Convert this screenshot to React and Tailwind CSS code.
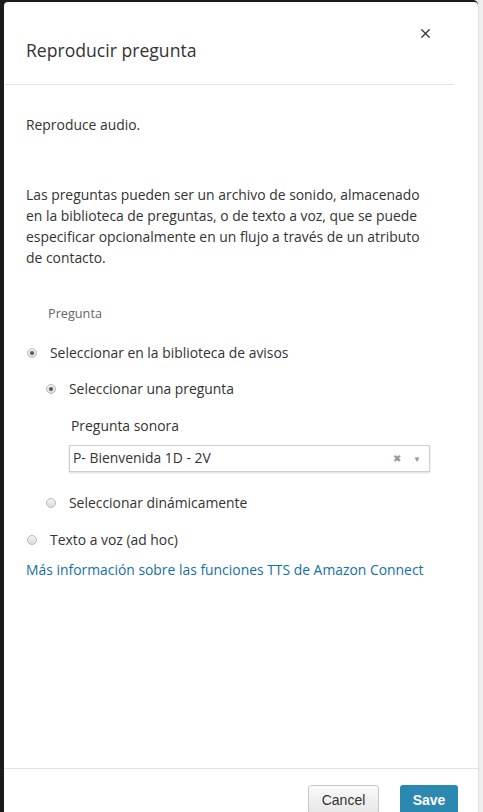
import { X } from 'lucide-react';

function Radio({ checked }) {
  return (
    <span className="flex h-[10px] w-[10px] shrink-0 items-center justify-center rounded-full border border-[#b9b9b9] bg-gradient-to-b from-[#f4f4f4] to-[#dcdcdc]">
      {checked && <span className="h-[4px] w-[4px] rounded-full bg-[#555]" />}
    </span>
  );
}

function Option({ checked, label, indent, className }) {
  return (
    <div className={`flex items-center leading-[20px] ${indent ? 'ml-[20px]' : 'ml-[1px]'} ${className}`}>
      <Radio checked={checked} />
      <span className="ml-[13px] text-[#333]">{label}</span>
    </div>
  );
}

export default function App() {
  return (
    <div
      className="flex h-[812px] w-[483px] overflow-hidden bg-[#ececec] text-[13.9px] text-[#333]"
      style={{ fontFamily: '"Open Sans", "Noto Sans", sans-serif' }}
    >
      <div className="w-[4px] shrink-0 bg-[#1b1b1b]" />
      <div className="w-[474px] shrink-0 rounded-tr-[5px] bg-[#1b1b1b] pt-[2px]">
        <div className="flex h-full flex-col rounded-t-[4px] bg-white">
          {/* header */}
          <div className="ml-[1px] mr-[24px] flex items-start justify-between border-b border-[#e3e3e3] pb-[22px] pl-[21px] pr-[21px] pt-[24px]">
            <h1 className="mt-[12px] text-[17.6px] leading-[24px] text-[#333]">Reproducir pregunta</h1>
            <X className="h-[15px] w-[15px] text-[#333]" strokeWidth={2} />
          </div>

          {/* body */}
          <div className="flex-1 px-[22px] pt-[30px]">
            <p className="leading-[20px]">Reproduce audio.</p>
            <p className="mt-[49px] w-[402px] leading-[21px]">
              Las preguntas pueden ser un archivo de sonido, almacenado en la biblioteca de preguntas, o de texto a voz, que se puede especificar opcionalmente en un flujo a través de un atributo de contacto.
            </p>

            <div className="ml-[22px] mt-[36px] text-[12.7px] leading-[18px] text-[#666]">Pregunta</div>

            <Option checked label="Seleccionar en la biblioteca de avisos" className="mt-[21px]" />
            <Option checked indent label="Seleccionar una pregunta" className="mt-[16px]" />

            <div className="ml-[45px] mt-[17px] leading-[20px]">Pregunta sonora</div>
            <div className="ml-[43px] mt-[9px] flex h-[27px] w-[361px] items-center border border-[#cfcfcf] pl-[3px] pr-[8px] shadow-[0_1px_2px_rgba(0,0,0,0.15)]">
              <span className="flex-1 text-[#333]">P- Bienvenida 1D - 2V</span>
              <span className="text-[10px] text-[#999]">✖</span>
              <span className="ml-[12px] text-[8px] text-[#999]">▼</span>
            </div>

            <Option indent label="Seleccionar dinámicamente" className="mt-[21px]" />
            <Option label="Texto a voz (ad hoc)" className="mt-[17px]" />

            <a className="mt-[10px] block leading-[20px] text-[#1470a7]">
              Más información sobre las funciones TTS de Amazon Connect
            </a>
          </div>

          {/* footer */}
          <div
            className="flex h-[44px] shrink-0 justify-end gap-[21px] border-t border-[#e3e3e3] pr-[20px] pt-[16px]"
            style={{ fontFamily: '"Liberation Sans", Arial, sans-serif' }}
          >
            <button className="h-[30px] w-[71px] rounded-[3px] border border-[#c8c8c8] bg-gradient-to-b from-[#fafafa] to-[#e6e6e6] text-[14px] text-[#333]">
              Cancel
            </button>
            <button className="h-[30px] w-[58px] rounded-[3px] bg-[#2a88b1] text-[14px] font-bold text-white">
              Save
            </button>
          </div>
        </div>
      </div>
      <div className="w-[5px] shrink-0 border-l border-[#dedede] bg-[#efefef]" />
    </div>
  );
}
